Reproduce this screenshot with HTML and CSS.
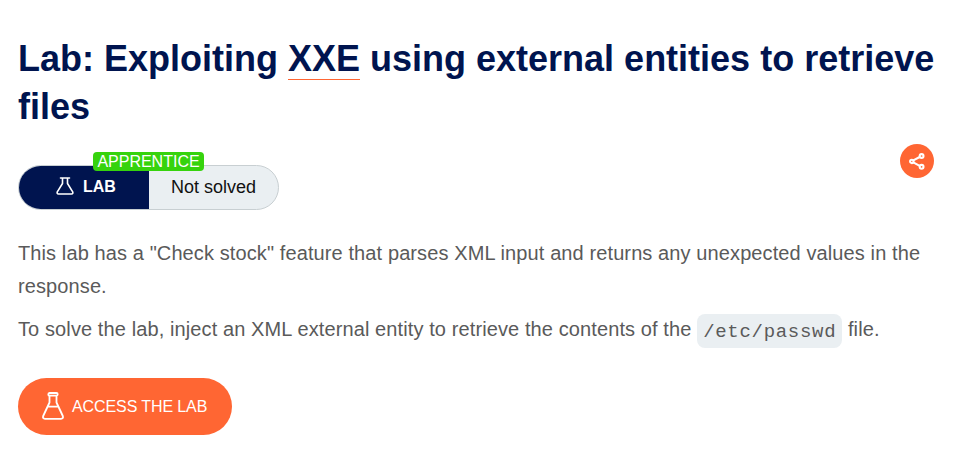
FILE: index.html
```html
<!DOCTYPE html>
<html lang="en">
<head>
<meta charset="utf-8">
<title>Lab: Exploiting XXE using external entities to retrieve files</title>
<link rel="stylesheet" href="styles.css">
</head>
<body>
<main class="page">
  <h1 class="title">Lab: Exploiting <a class="title-link">XXE</a> using external entities to retrieve files</h1>
  <div class="meta">
    <div class="status">
      <span class="level">APPRENTICE</span>
      <div class="status-type">
        <svg class="flask-small" viewBox="0 0 18 18" fill="none" stroke="#fff" stroke-width="1.6" stroke-linejoin="round" stroke-linecap="round"><path d="M4.500 1h9M6.500 1v5.500L1.300 14.800Q.6 17 2.500 17h13Q17.400 17 16.700 14.800L11.500 6.500V1"/></svg>
        <span>LAB</span>
      </div>
      <div class="status-state">Not solved</div>
    </div>
    <div class="share">
      <svg class="share-icon" viewBox="0 0 16 17" fill="none" stroke="#fff" stroke-width="2.1"><path d="M4.300 7.400 10.700 4M4.300 9.300l6.400 3.500"/><circle cx="2.800" cy="8.400" r="1.700"/><circle cx="12.600" cy="3" r="1.900"/><circle cx="12.600" cy="13.800" r="1.900"/></svg>
    </div>
  </div>
  <p class="text">This lab has a "Check stock" feature that parses XML input and returns any unexpected values in the response.</p>
  <p class="text">To solve the lab, inject an XML external entity to retrieve the contents of the <code class="code">/etc/passwd</code> file.</p>
  <a class="access">
    <svg class="flask-large" viewBox="0 0 22 28" fill="none" stroke="#fff" stroke-width="1.8" stroke-linejoin="round"><path d="M7.500 1h7q1.200 0 1.200 1.200T14.500 3.700h-7Q6.300 3.700 6.300 2.400T7.500 1ZM7.500 3.700v6.800L1.200 24q-.8 2.800 1.800 2.800h16q2.600 0 1.800-2.800L14.500 10.500V3.700M5.600 14.600h10.800"/></svg>
    <span>ACCESS THE LAB</span>
  </a>
</main>
</body>
</html>
```
FILE: styles.css
```css
body {
  margin: 0;
  background: #fff;
  color: #5a5a5a;
  font-family: "Liberation Sans", Arial, sans-serif;
}
.page {
  padding: 35px 18px 0;
}
.title {
  margin: 0;
  color: #00144f;
  font-size: 36px;
  line-height: 48px;
}
.title-link {
  border-bottom: 1px solid #ff6633;
}
.meta {
  display: flex;
  justify-content: space-between;
  align-items: flex-start;
  height: 66px;
  margin-top: 13px;
  padding-right: 14px;
}
.status {
  position: relative;
  display: flex;
  box-sizing: border-box;
  width: 261px;
  height: 45px;
  margin-top: 21px;
  border: 1px solid #c8cfd2;
  border-radius: 23px;
  background: #eaeff2;
  font-size: 18px;
}
.status-type {
  display: flex;
  align-items: center;
  box-sizing: border-box;
  width: 130px;
  padding: 0 0 2px 37px;
  border-radius: 22px 0 0 22px;
  background: #00144f;
  color: #fff;
  font-size: 16px;
  font-weight: bold;
}
.flask-small {
  width: 18px;
  height: 18px;
  margin: 0 9px 2px 0;
}
.status-state {
  padding-left: 22px;
  color: #111;
  line-height: 42px;
}
.level {
  position: absolute;
  top: -14px;
  left: 74px;
  width: 111px;
  height: 19px;
  border-radius: 4px;
  background: #36d30d;
  color: #fff;
  font-size: 16px;
  line-height: 19px;
  text-align: center;
}
.share {
  display: flex;
  align-items: center;
  justify-content: center;
  width: 34px;
  height: 34px;
  border-radius: 50%;
  background: #ff6633;
}
.share-icon {
  width: 16px;
  height: 17px;
}
.text {
  margin: 0;
  padding-top: 10px;
  font-size: 20px;
  line-height: 33px;
  letter-spacing: 0.105px;
}
.meta + .text {
  padding-top: 27px;
}
.code {
  position: relative;
  top: 1px;
  padding: 7px 6px 5px;
  border-radius: 8px;
  background: #eaeff2;
  font-family: "Liberation Mono", "Courier New", monospace;
  font-size: 19px;
  letter-spacing: 0.7px;
}
.access {
  display: flex;
  align-items: center;
  box-sizing: border-box;
  width: 214px;
  height: 57px;
  margin-top: 30px;
  padding-left: 24px;
  border-radius: 29px;
  background: #ff6633;
  color: #fff;
  font-size: 16px;
  letter-spacing: -0.1px;
}
.flask-large {
  width: 22px;
  height: 28px;
  margin: 0 8px 2px 0;
}
```
